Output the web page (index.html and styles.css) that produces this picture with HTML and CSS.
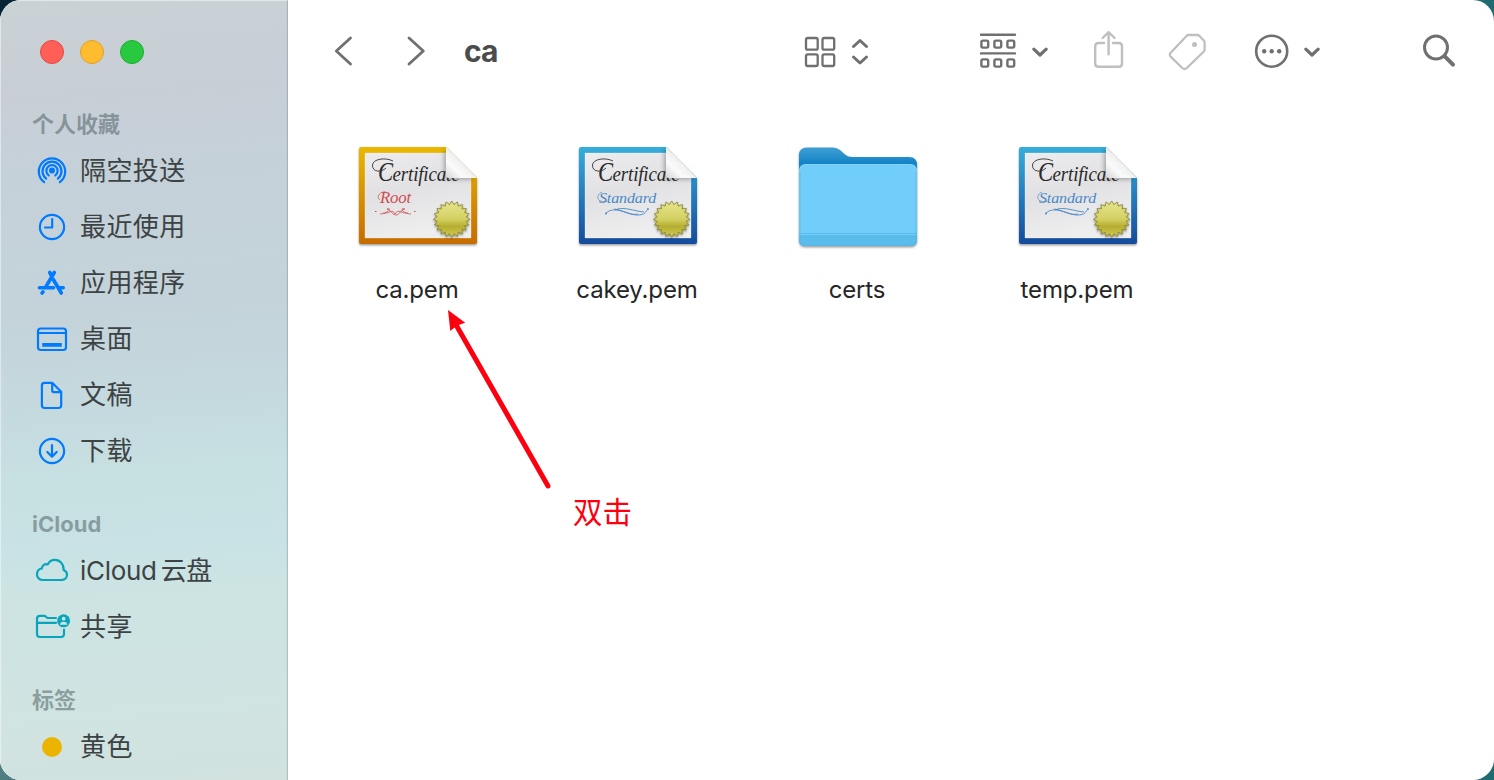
FILE: index.html
```html
<!DOCTYPE html>
<html lang="zh-CN">
<head>
<meta charset="utf-8">
<title>ca</title>
<link rel="stylesheet" href="styles.css">
</head>
<body>
<svg class="defs" width="0" height="0" aria-hidden="true">
  <defs>
    <linearGradient id="gold" x1="0" y1="0" x2="0" y2="1"><stop offset="0" stop-color="#e9b800"/><stop offset="1" stop-color="#c66c00"/></linearGradient>
    <linearGradient id="blue" x1="0" y1="0" x2="0" y2="1"><stop offset="0" stop-color="#35aeda"/><stop offset="1" stop-color="#164b9c"/></linearGradient>
    <linearGradient id="paper" x1="0" y1="0" x2="0.3" y2="1"><stop offset="0" stop-color="#ededef"/><stop offset=".5" stop-color="#e1e1e3"/><stop offset="1" stop-color="#eeeeef"/></linearGradient>
    <linearGradient id="fold" x1="0" y1="1" x2=".55" y2=".42"><stop offset="0" stop-color="#d4d4d4"/><stop offset=".5" stop-color="#fbfbfb"/><stop offset="1" stop-color="#ececec"/></linearGradient>
    <linearGradient id="seal" x1="0" y1="0" x2="0" y2="1"><stop offset="0" stop-color="#e6e58c"/><stop offset=".5" stop-color="#d3d062"/><stop offset=".7" stop-color="#b4ae30"/><stop offset="1" stop-color="#d2cc57"/></linearGradient>
    <linearGradient id="folderBack" x1="0" y1="0" x2="0" y2="1"><stop offset="0" stop-color="#3f9fd3"/><stop offset=".16" stop-color="#1483c6"/><stop offset="1" stop-color="#1483c6"/></linearGradient>
    <filter id="soft" x="-20%" y="-20%" width="140%" height="140%"><feDropShadow dx="0" dy="1.3" stdDeviation="1.3" flood-opacity=".42"/></filter>
    <filter id="foldShade" x="-40%" y="-30%" width="180%" height="180%"><feDropShadow dx="-2" dy="1.5" stdDeviation="2" flood-opacity=".28"/></filter>
    <clipPath id="cut"><path d="M14 12H101L132 43V109H14Z"/></clipPath>
    <g id="certBody">
      <path d="M20 18H126V103H20Z" fill="url(#paper)" stroke="#fff" stroke-opacity=".35" stroke-width=".8"/>
      <text class="script" x="47.500" y="45.500" font-size="20" textLength="67" lengthAdjust="spacingAndGlyphs" fill="#2a2a2a">ertificate</text>
      <text class="script" x="33" y="45.500" font-size="28" fill="#2a2a2a" textLength="15" lengthAdjust="spacingAndGlyphs">C</text>
      <path d="M48 26C40 22 28 24 27.500 30C27 37 36 38 41 33" fill="none" stroke="#333" stroke-width=".9"/>
    </g>
    <g id="certFront">
      <path d="M101 12L132 43H104Q101 43 101 40Z" fill="url(#fold)" filter="url(#foldShade)"/>
      <path d="M106.700 66l2.300 3.700 3.300-2.800 1 4.300 4.100-1.700-.4 4.400 4.400-.4-1.700 4.100 4.300 1-2.800 3.300 3.700 2.300-3.700 2.300 2.800 3.300-4.300 1 1.700 4.100-4.400-.4.4 4.400-4.100-1.700-1 4.300-3.300-2.800-2.300 3.700-2.300-3.700-3.300 2.800-1-4.300-4.100 1.700.4-4.400-4.400.4 1.700-4.100-4.300-1 2.800-3.300-3.700-2.300 3.700-2.300-2.800-3.300 4.300-1-1.700-4.100 4.400.4-.4-4.400 4.100 1.700 1-4.300 3.300 2.800z" fill="url(#seal)" stroke="#858028" stroke-width=".8" filter="url(#soft)"/>
    </g>
    <g id="certBlue">
      <path d="M16 12H101L132 43V107Q132 109 130 109H16Q14 109 14 107V14Q14 12 16 12Z" fill="url(#blue)" filter="url(#soft)"/>
      <g clip-path="url(#cut)"><use href="#certBody"/>
      <text class="script" x="34" y="67.500" font-size="15" textLength="57" lengthAdjust="spacingAndGlyphs" fill="#4a88c6">Standard</text>
      <path d="M42 66C32 69 30 60 37 57" fill="none" stroke="#4a88c6" stroke-width=".7"/>
      <path d="M41 78C50 70 63 80 72 80S80 77 83 74M50 75C59 71 68 76 79 77M49 74C58 75 65 81 73 79" fill="none" stroke="#4a88c6" stroke-width=".9"/><circle cx="41" cy="78.500" r="1" fill="#4a88c6"/><circle cx="83" cy="74" r=".9" fill="#4a88c6"/></g>
      <use href="#certFront"/>
    </g>
  </defs>
</svg>
<div class="window">
  <aside class="sidebar">
    <div class="lights"><i class="light red"></i><i class="light amber"></i><i class="light green"></i></div>
    <h2 class="group">个人收藏</h2>
    <div class="item"><svg class="icon" viewBox="32 151 40 40"><circle cx="52" cy="170.500" r="1.900" fill="#007aff"/><path d="M44.200 182.200A13.200 13.200 0 1 1 59.800 182.200M46.200 178.600A9.500 9.500 0 1 1 57.800 178.600M48.700 175.300A5.600 5.600 0 1 1 55.300 175.300"/></svg><span>隔空投送</span></div>
    <div class="item"><svg class="icon" viewBox="32 207 40 40"><circle cx="52" cy="227" r="12.100"/><path d="M52.200 219V227.500H45"/></svg><span>最近使用</span></div>
    <div class="item"><svg class="icon app" viewBox="32 263 40 40"><path d="M54.300 272.500L45.500 287.300M49.700 272.500L51.700 276M39.500 287.800H53.500M60 287.800H63.200M53.300 279.500L61.300 293M43 292L42 293"/></svg><span>应用程序</span></div>
    <div class="item"><svg class="icon" viewBox="32 319 40 40"><rect x="38" y="328.500" width="28" height="21.500" rx="2.700"/><path d="M38 333H66"/><rect class="solid" x="42.200" y="343" width="19.600" height="3.800" rx=".6"/></svg><span>桌面</span></div>
    <div class="item"><svg class="icon" viewBox="32 375 40 40"><path d="M44.300 382.800H52.200L61.200 391.800V405.300Q61.200 408 58.500 408H44.500Q41.900 408 41.900 405.300V385.400Q41.900 382.800 44.300 382.800ZM52.200 383V390.500Q52.200 392.200 54 392.200H61"/></svg><span>文稿</span></div>
    <div class="item"><svg class="icon" viewBox="32 431 40 40"><circle cx="52" cy="451" r="12.100"/><path d="M52 445V456.500M47.300 452L52 456.700 56.700 452"/></svg><span>下载</span></div>
    <h2 class="group latin-group">iCloud</h2>
    <div class="item"><svg class="icon teal" viewBox="32 551 40 40"><path d="M42.500 580H61.500C64.800 580 67 577.500 67 574.800 67 572.500 65.400 570.600 63.600 570 64 564.500 60 559.800 55 559.800 51.500 559.800 49 561.700 47.800 564.400 45 563.400 42 565.300 41.800 568.500 39 569 37 571.300 37 574.400 37 577.600 39.500 580 42.500 580Z"/></svg><span class="latin">iCloud<b>云盘</b></span></div>
    <div class="item"><svg class="icon teal" viewBox="32 607 40 40"><path d="M56 618H47.500L44.800 615.800H40Q37 615.800 37 618.600V634Q37 637 40 637H61Q64 637 64 634V629.500M37 622.800H56"/><circle class="solid" cx="63.600" cy="620.800" r="6.500"/><circle cx="63.600" cy="618.700" r="1.900" class="pale"/><path class="pale" d="M59.900 624.800Q60.400 621.800 63.600 621.800T67.300 624.800Z"/></svg><span>共享</span></div>
    <h2 class="group">标签</h2>
    <div class="item"><i class="dot"></i><span>黄色</span></div>
  </aside>
  <main class="main">
    <header class="toolbar">
      <svg class="tool back" viewBox="333 29 20 44"><path d="M350.500 38L336.300 51 350.500 64"/></svg>
      <svg class="tool forward" viewBox="407 29 20 44"><path d="M409 38L423.300 51 409 64"/></svg>
      <h1 class="title">ca</h1>
      <svg class="tool grid" viewBox="804 29 32 44"><rect x="806" y="38" width="11.700" height="11.700" rx="1.800"/><rect x="822.500" y="38" width="11.700" height="11.700" rx="1.800"/><rect x="806" y="54.300" width="11.700" height="11.700" rx="1.800"/><rect x="822.500" y="54.300" width="11.700" height="11.700" rx="1.800"/></svg>
      <svg class="tool sort" viewBox="850 29 20 44"><path d="M853.500 46.500L860 40.500 866.500 46.500M853.500 57L860 63 866.500 57"/></svg>
      <svg class="tool arrange" viewBox="979 29 38 44"><path d="M981 34.700H1015M981 53.400H1015"/><rect x="981.400" y="40.600" width="6.800" height="7" rx="1.500"/><rect x="994.400" y="40.600" width="6.800" height="7" rx="1.500"/><rect x="1007.400" y="40.600" width="6.800" height="7" rx="1.500"/><rect x="981.400" y="59.400" width="6.800" height="7.200" rx="1.500"/><rect x="994.400" y="59.400" width="6.800" height="7.200" rx="1.500"/><rect x="1007.400" y="59.400" width="6.800" height="7.200" rx="1.500"/></svg>
      <svg class="tool chev1" viewBox="1030 29 20 44"><path d="M1033.800 49.200L1040 55 1046.200 49.200"/></svg>
      <svg class="tool share" viewBox="1092 29 34 44"><path d="M1104 43H1098.500Q1095.200 43 1095.200 46.300V63.500Q1095.200 66.800 1098.500 66.800H1118.700Q1122 66.800 1122 63.500V46.300Q1122 43 1118.700 43H1113M1108.600 54.300V32.700M1102.600 38L1108.600 32.200 1114.600 38"/></svg>
      <svg class="tool tag" viewBox="1167 29 40 44"><path d="M1187.500 35H1197.200Q1198.500 35 1199.500 36L1203.600 40.200Q1204.600 41.200 1204.600 42.600V49.500Q1204.600 50.700 1203.600 51.700L1186.800 68Q1184.500 70 1182.300 68L1170.900 56.900Q1168.700 54.700 1170.900 52.500Z"/><circle cx="1194.500" cy="44.500" r="2.500"/></svg>
      <svg class="tool more" viewBox="1254 29 36 44"><circle cx="1271.700" cy="51.200" r="15.500"/><g><circle cx="1264.200" cy="51.200" r="2.200"/><circle cx="1271.700" cy="51.200" r="2.200"/><circle cx="1279.200" cy="51.200" r="2.200"/></g></svg>
      <svg class="tool chev2" viewBox="1302 29 20 44"><path d="M1305.800 49.200L1312 55 1318.200 49.200"/></svg>
      <svg class="tool search" viewBox="1422 29 34 44"><circle cx="1436" cy="47.500" r="11.500"/><path d="M1444.500 56.200L1453 64.700"/></svg>
    </header>
    <section class="files">
      <div class="file"><svg class="art" viewBox="0 0 144 120"><path d="M16 12H101L132 43V107Q132 109 130 109H16Q14 109 14 107V14Q14 12 16 12Z" fill="url(#gold)" filter="url(#soft)"/><g clip-path="url(#cut)"><use href="#certBody"/><text class="script" x="35" y="67.500" font-size="16" textLength="31" lengthAdjust="spacingAndGlyphs" fill="#cf4c50">Root</text><path d="M41 57C34 56 31 63 35 65" fill="none" stroke="#cf4c50" stroke-width=".7"/><path d="M35 79C42 79 48 72 42 74C46 75 47 80 51 80S55 75 60 74C53 72 59 79 66 79M38 78C45 79 47 73 50 79C54 73 56 79 63 78" fill="none" stroke="#cf4c50" stroke-width=".8"/><path d="M30 76.500H31.500M69 76.500H70.500" stroke="#cf4c50"/></g><use href="#certFront"/></svg><span>ca.pem</span></div>
      <div class="file"><svg class="art" viewBox="0 0 144 120"><use href="#certBlue"/></svg><span>cakey.pem</span></div>
      <div class="file"><svg class="art" viewBox="0 0 144 120"><path d="M14 105V20Q14 12.500 22 12.500H48Q52 12.500 55 15L60 19.500Q63 22 67 22H124Q132 22 132 30V105Q132 111 125 111H21Q14 111 14 105Z" fill="url(#folderBack)" filter="url(#soft)"/><path d="M14 36Q14 29 21 29H125Q132 29 132 36V104Q132 111 125 111H21Q14 111 14 104Z" fill="#71cdf9"/><path d="M14.500 38Q14.500 29.500 22 29.500H124Q131.500 29.500 131.500 38" fill="none" stroke="#83d2f8"/><path d="M14 100H132V104Q132 111 125 111H21Q14 111 14 104Z" fill="#5bbdeb"/><path d="M14 98.500H132M14 102H132" stroke="#54b5e5" stroke-width=".7"/><path d="M15 36V104Q15 110 21 110H125Q131 110 131 104V36" fill="none" stroke="#55b6e4" stroke-opacity=".65"/></svg><span>certs</span></div>
      <div class="file"><svg class="art" viewBox="0 0 144 120"><use href="#certBlue"/></svg><span>temp.pem</span></div>
    </section>
  </main>
  <svg class="arrow" viewBox="440 300 120 200"><path d="M548 486L455 323" fill="none" stroke="#fc0010" stroke-width="5" stroke-linecap="round"/><path d="M448 310L465.200 322.700 458 325.200 455.500 323.500 456.500 326 450.300 331Z" fill="#fc0010"/></svg>
  <span class="note">双击</span>
</div>
</body>
</html>
```
FILE: styles.css
```css
* { box-sizing: border-box; }
body {
  margin: 0;
  height: 780px;
  overflow: hidden;
  background: linear-gradient(90deg, transparent 50%, #206b70 50%), linear-gradient(#052534 50%, #4e7e7f 50%);
  font-family: Inter, "Noto Sans CJK SC", sans-serif;
}
.defs { position: absolute; }
.window {
  position: relative;
  display: flex;
  width: 1494px;
  height: 780px;
  border-radius: 21px;
  overflow: hidden;
  background: #fff;
}
.sidebar {
  width: 288px;
  flex: none;
  background: linear-gradient(176deg, #c9d2d5 0, #c7ced6 13%, #c5d1d9 22%, #c4d3da 40%, #c5dbe0 54%, #c7e0e1 60%, #c8e2e5 69%, #cde4e2 76%, #d0e4e2 90%, #d1e2df 100%);
  box-shadow: inset -2px 0 1px -1px rgba(70, 90, 100, .28), inset 1px 1px 1px rgba(255, 255, 255, .5);
}
.lights { display: flex; gap: 16px; height: 79px; padding: 40px 0 0 40px; }
.light { width: 24px; height: 24px; border-radius: 50%; border: 1px solid; }
.red { background: #ff5f57; border-color: #e5483f; }
.amber { background: #febc2e; border-color: #e0a028; }
.green { background: #28c840; border-color: #1eac30; }
.group {
  margin: 0;
  height: 64px;
  padding: 26px 0 0 32px;
  font-size: 22px;
  line-height: 38px;
  font-weight: 600;
  color: rgba(70, 88, 90, .5);
}
.latin-group { font-weight: 700; }
.item {
  display: flex;
  align-items: center;
  gap: 8px;
  height: 56px;
  padding-left: 32px;
  font-size: 26px;
  line-height: 56px;
  letter-spacing: .4px;
  color: #3d4344;
}
.latin { letter-spacing: -.3px; }
.latin b { font-weight: 400; margin-left: 4px; }
.icon {
  width: 40px;
  height: 40px;
  fill: none;
  stroke: #007aff;
  stroke-width: 2.2;
  stroke-linecap: round;
  stroke-linejoin: round;
}
.icon .solid { fill: #007aff; stroke: none; }
.app { stroke-width: 3.6; }
.teal { stroke: #08a5bd; }
.teal .solid { fill: #08a5bd; }
.icon .pale { fill: #cee4e2; stroke: none; }
.dot { width: 20px; height: 20px; margin: 0 10px; border-radius: 50%; background: #eab400; }
.main { flex: 1; }
.toolbar { display: flex; align-items: center; height: 135px; padding: 0 38px 33px 45px; }
.tool {
  flex: none;
  height: 44px;
  fill: none;
  stroke: #707070;
  stroke-width: 2.8;
  stroke-linecap: round;
  stroke-linejoin: round;
}
.back, .forward, .sort, .chev1, .chev2 { width: 20px; }
.forward { margin-left: 54px; }
.title {
  width: 340px;
  margin: 0 0 0 37px;
  font-size: 30px;
  line-height: 44px;
  font-weight: 700;
  letter-spacing: -1px;
  color: #4c4c4c;
}
.grid { width: 32px; stroke-width: 2.3; }
.sort { margin-left: 14px; stroke-width: 3; }
.arrange { width: 38px; margin-left: 109px; stroke-width: 2.4; }
.chev1 { margin-left: 13px; stroke-width: 3.2; }
.share { width: 34px; margin-left: 42px; stroke: #bfbfbf; stroke-width: 2.4; }
.tag { width: 40px; margin-left: 41px; stroke: #bfbfbf; stroke-width: 2.3; }
.tag circle { fill: #bfbfbf; stroke: none; }
.more { width: 36px; margin-left: 47px; stroke-width: 2.6; }
.more g { fill: #707070; stroke: none; }
.chev2 { margin-left: 12px; stroke-width: 3.2; }
.search { width: 34px; margin-left: 100px; stroke-width: 3; }
.search path { stroke-width: 4; }
.files { display: flex; padding-left: 19px; }
.file {
  display: flex;
  flex-direction: column;
  align-items: center;
  gap: 15px;
  width: 220px;
  font-size: 24px;
  line-height: 40px;
  letter-spacing: -.15px;
  color: #262626;
}
.art { width: 144px; height: 120px; }
.script { font-family: "Liberation Serif", serif; font-style: italic; }
.arrow { position: absolute; left: 440px; top: 300px; width: 120px; height: 200px; }
.note {
  position: absolute;
  left: 573px;
  top: 490px;
  font: 29.5px/40px "Noto Sans CJK SC", sans-serif;
  color: #fc0010;
}
```
